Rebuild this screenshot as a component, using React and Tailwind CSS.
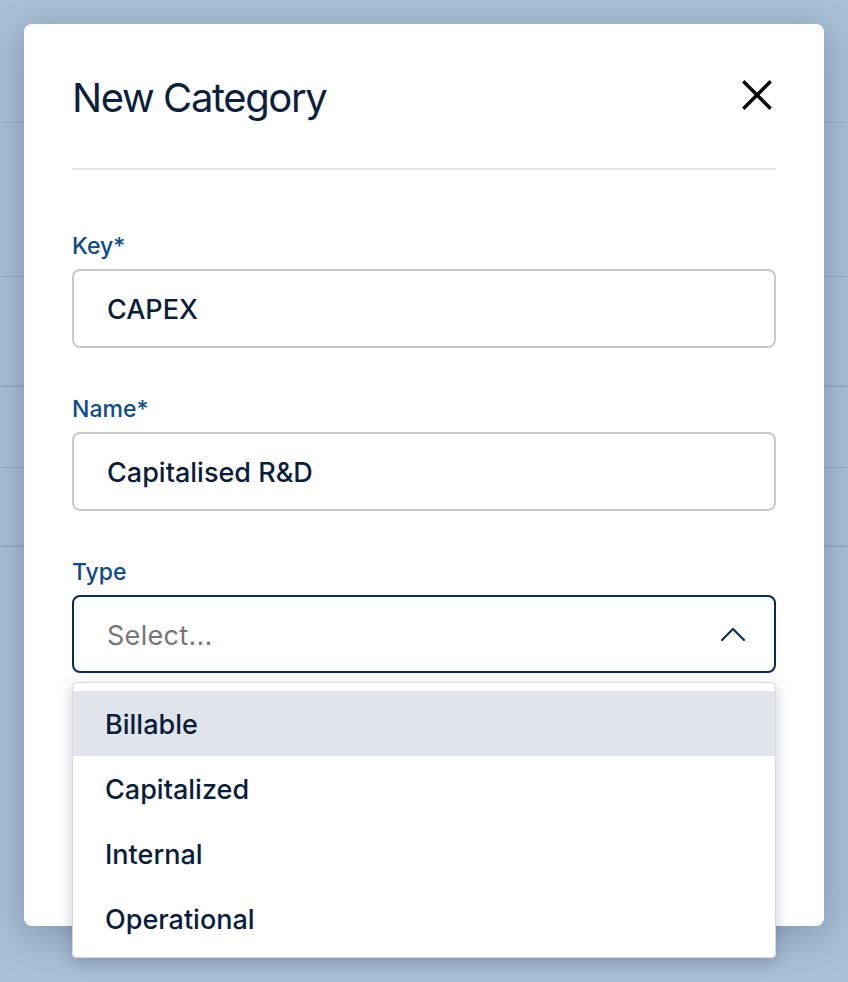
import React, { useState } from 'react';

const options = ['Billable', 'Capitalized', 'Internal', 'Operational'];

const Field = ({ label, value }) => (
  <div className="flex flex-col">
    <label className="text-[23px] leading-[28px] font-medium text-[#0d4a87]">{label}</label>
    <div className="mt-[9px] h-[79px] rounded-lg border-2 border-[#c9c9cb] flex items-center px-[33px] pt-1">
      <span className="text-[27px] font-medium text-[#0a1d3b]">{value}</span>
    </div>
  </div>
);

const App = () => {
  const [hovered, setHovered] = useState('Billable');

  return (
    <div className="relative h-[982px] overflow-hidden bg-[#aac0d6] font-['Inter',sans-serif]">
      {/* page behind the overlay */}
      <div className="flex flex-col">
        <div className="h-[123px] border-b border-[#99afc7]"></div>
        <div className="h-[154px] border-b border-[#99afc7]"></div>
        <div className="h-[110px] border-b-2 border-[#99afc7]"></div>
        <div className="h-[81px] border-b border-[#99afc7]"></div>
        <div className="h-[79px] border-b-2 border-[#99afc7]"></div>
      </div>

      <div className="absolute inset-0 flex justify-center pt-6">
        <div className="w-[800px] h-[902px] bg-white rounded-lg shadow-[0_8px_40px_rgba(40,60,90,0.35)] px-12 pt-[50px]">
          <div className="h-12 flex items-center justify-between">
            <h2 className="text-[40px] leading-[48px] font-normal text-[#0d1f3c] tracking-[-1.4px]">New Category</h2>
            <button className="w-[30px] h-[30px] mr-[4px] mb-[6px] flex items-center justify-center text-black">
              <svg width="30" height="30" viewBox="0 0 30 30" fill="none" stroke="currentColor" strokeWidth="3.4" strokeLinecap="square">
                <line x1="2.5" y1="2.5" x2="27.5" y2="27.5" />
                <line x1="27.5" y1="2.5" x2="2.5" y2="27.5" />
              </svg>
            </button>
          </div>
          <div className="mt-[46px] h-[2px] bg-[#e3e5ea]"></div>

          <div className="mt-[62px] flex flex-col gap-[47px]">
            <Field label="Key*" value="CAPEX" />
            <Field label="Name*" value="Capitalised R&D" />

            <div className="relative flex flex-col">
              <label className="text-[23px] leading-[28px] font-medium text-[#0d4a87]">Type</label>
              <div className="mt-[9px] h-[78px] rounded-lg border-2 border-[#0b2d52] flex items-center justify-between pl-[33px] pr-[28px] pt-1">
                <span className="text-[27px] font-normal text-[#767676] tracking-[0.3px]">Select...</span>
                <svg width="26" height="16" viewBox="0 0 26 16" fill="none" stroke="#0b2d52" strokeWidth="2.2" strokeLinecap="round" strokeLinejoin="round" className="-mt-1">
                  <polyline points="2,14 13,3 24,14" />
                </svg>
              </div>

              <ul className="absolute left-0 right-0 top-[calc(100%+9px)] z-10 bg-white border border-[#d9d9db] rounded pt-2 pb-[6px] shadow-[0_6px_16px_rgba(30,50,80,0.25)]">
                {options.map(o => (
                  <li
                    key={o}
                    onMouseEnter={() => setHovered(o)}
                    className={`h-[65px] flex items-center pl-8 pt-1 text-[27px] font-medium text-[#0a1d3b] ${
                      hovered === o ? 'bg-[#e1e4eb]' : 'bg-white'
                    }`}
                  >
                    {o}
                  </li>
                ))}
              </ul>
            </div>
          </div>
        </div>
      </div>
    </div>
  );
};

export default App;
